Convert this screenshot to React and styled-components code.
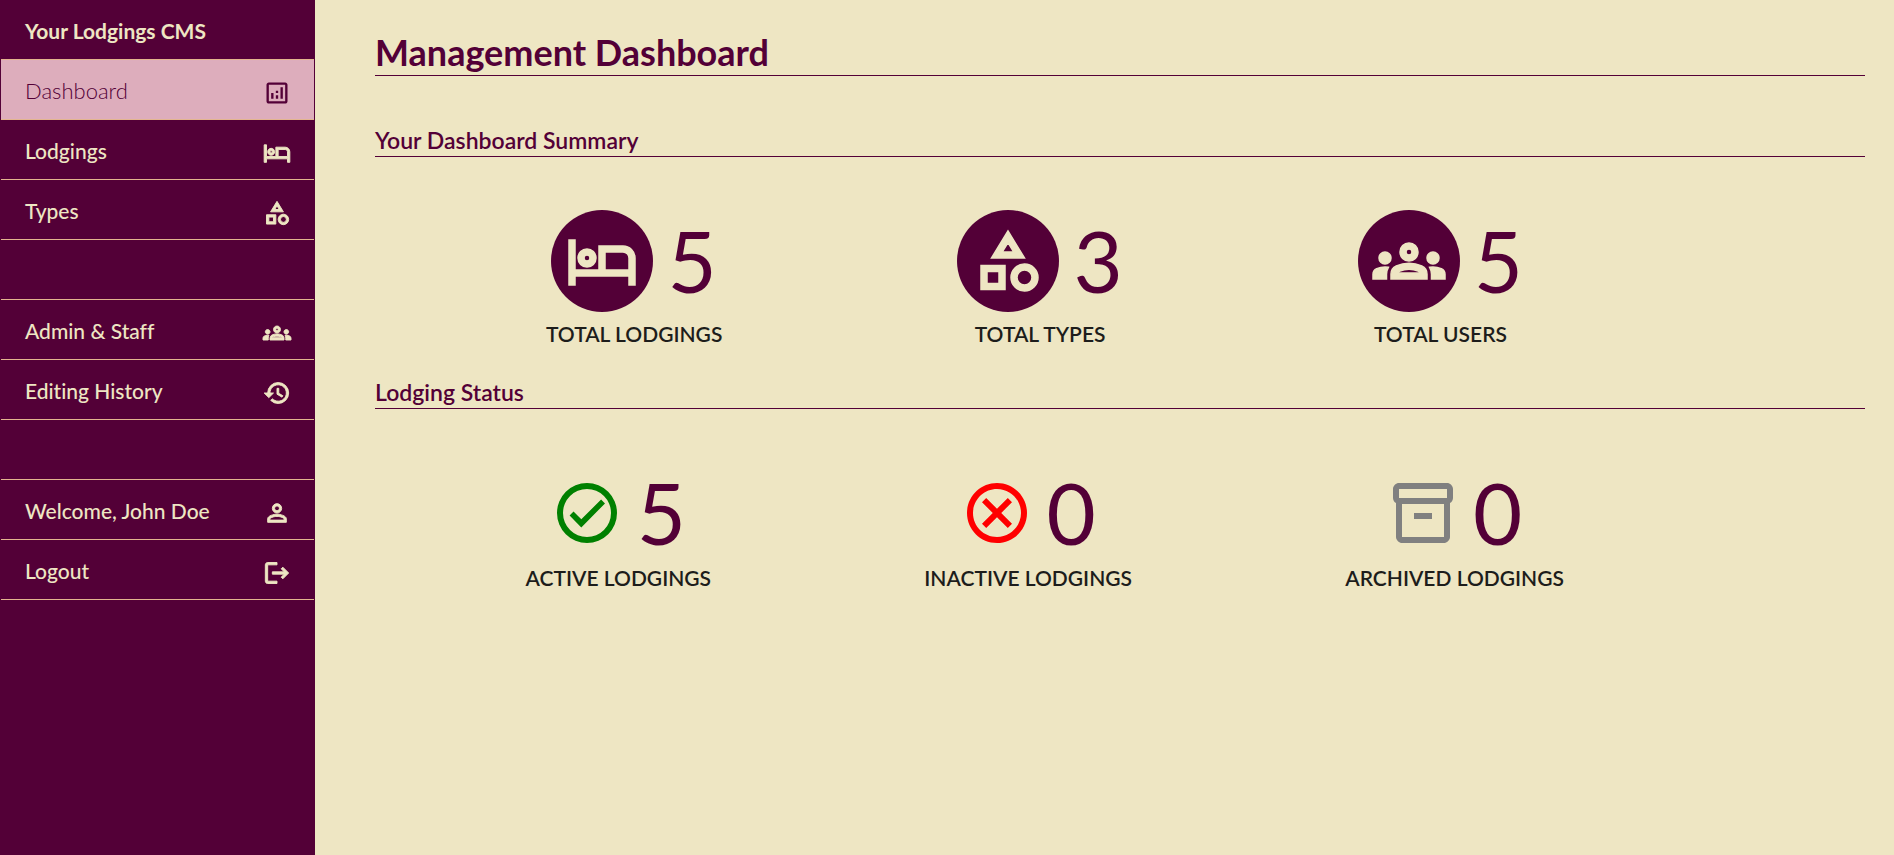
import React from 'react';
import styled, { createGlobalStyle } from 'styled-components';
import {
  MdHistory,
  MdLogout,
  MdOutlineAnalytics,
  MdOutlineCancel,
  MdOutlineCategory,
  MdOutlineGroups,
  MdOutlineHotel,
  MdOutlineInventory2,
  MdPersonOutline,
} from 'react-icons/md';

const plum = '#530037';
const cream = '#eee6c3';

const GlobalStyle = createGlobalStyle`
  *, *::before, *::after { box-sizing: border-box; }
  body {
    margin: 0;
    background: ${cream};
    color: #1d1d1b;
    font-family: Lato, "Liberation Sans", sans-serif;
    font-size: 21px;
    font-weight: 500;
    font-variant-ligatures: none;
  }
`;

const Layout = styled.div`
  display: flex;
  min-height: 100vh;
`;

const Sidebar = styled.aside`
  flex: 0 0 315px;
  padding: 0 1px;
  background: ${plum};
  color: ${cream};
`;

const Brand = styled.div`
  height: 60px;
  padding: 0 24px;
  border-bottom: 1px solid #e3b58f;
  font-weight: 700;
  line-height: 61px;
`;

const NavList = styled.ul`
  margin: 0;
  padding: 0;
  list-style: none;
`;

const NavItem = styled.li`
  height: 60px;
  border-bottom: 1px solid #e3b58f;
`;

const NavLink = styled.a`
  display: flex;
  align-items: center;
  justify-content: space-between;
  height: 100%;
  padding: 2px 23px 0 24px;
  background: ${(p) => (p.$active ? '#ddadbc' : 'transparent')};
  color: ${(p) => (p.$active ? plum : cream)};
  font-size: ${(p) => (p.$active ? '22px' : '21px')};
  font-weight: ${(p) => (p.$active ? 300 : 500)};
  text-decoration: none;

  svg {
    width: 28px;
    height: 28px;
    margin-top: 4px;
    overflow: visible;
    stroke-width: ${(p) => (p.$active ? 0 : 0.8)};
  }

  path[fill='none'] {
    stroke: none;
  }
`;

const Main = styled.main`
  flex: 1;
  min-width: 0;
  padding: 32px 29px 32px 60px;
`;

const Title = styled.h1`
  margin: 0 0 48px;
  padding-bottom: 3px;
  border-bottom: 1px solid ${plum};
  color: ${plum};
  font-size: 36px;
  font-weight: 700;
  line-height: 40px;
`;

const SectionTitle = styled.h2`
  margin: 0;
  border-bottom: 1px solid ${plum};
  color: ${plum};
  font-size: 23px;
  font-weight: 600;
  line-height: 32px;
`;

const Stats = styled.div`
  display: grid;
  grid-template-columns: ${(p) => p.$tracks};
  padding: 53px 0 29px;

  > :nth-child(1) { grid-column: 2; }
  > :nth-child(2) { grid-column: 4; }
  > :nth-child(3) { grid-column: 6; }
`;

const Stat = styled.div`
  display: flex;
  flex-direction: column;
  align-items: center;
  gap: ${(p) => p.$gap};
`;

const Figure = styled.div`
  display: flex;
  align-items: center;
  gap: 14px;
  height: 102px;
`;

const Badge = styled.span`
  display: flex;
  padding: ${(p) => (p.$filled ? '15px' : '0')};
  border-radius: 50%;
  background: ${(p) => (p.$filled ? plum : 'transparent')};
  color: ${(p) => p.$color};

  svg {
    width: 72px;
    height: 72px;
    overflow: visible;
    stroke-width: ${(p) => (p.$filled ? 0.5 : 0)};
  }

  path[fill='none'] {
    stroke: none;
  }
`;

const Count = styled.span`
  color: ${plum};
  font-size: 85px;
  font-weight: 400;
  line-height: 100px;
  padding-bottom: 2px;
`;

const Label = styled.span`
  font-weight: 600;
  line-height: 26px;
  text-transform: uppercase;
`;

function CheckIcon(props) {
  return (
    <svg viewBox="0 0 24 24" fill="currentColor" {...props}>
      <path
        fillRule="evenodd"
        d="M12 2a10 10 0 1 0 0 20 10 10 0 0 0 0-20Zm0 2a8 8 0 1 1 0 16 8 8 0 0 1 0-16Z"
      />
      <path d="M6.2 12.8 7.5 11.5l2.6 2.6 6.6-6.6L18 8.8l-7.9 8Z" />
    </svg>
  );
}

const navigation = [
  { label: 'Dashboard', icon: MdOutlineAnalytics, active: true },
  { label: 'Lodgings', icon: MdOutlineHotel },
  { label: 'Types', icon: MdOutlineCategory },
  null,
  { label: 'Admin & Staff', icon: MdOutlineGroups },
  { label: 'Editing History', icon: MdHistory },
  null,
  { label: 'Welcome, John Doe', icon: MdPersonOutline },
  { label: 'Logout', icon: MdLogout },
];

const totals = [
  { label: 'Total Lodgings', count: 5, icon: MdOutlineHotel },
  { label: 'Total Types', count: 3, icon: MdOutlineCategory },
  { label: 'Total Users', count: 5, icon: MdOutlineGroups },
];

const statuses = [
  { label: 'Active Lodgings', count: 5, icon: CheckIcon, color: '#008000' },
  { label: 'Inactive Lodgings', count: 0, icon: MdOutlineCancel, color: '#ff0000' },
  { label: 'Archived Lodgings', count: 0, icon: MdOutlineInventory2, color: '#808080' },
];

function StatCard({ label, count, icon: Icon, color, gap }) {
  return (
    <Stat $gap={gap}>
      <Figure>
        <Badge $filled={!color} $color={color || cream}>
          <Icon aria-hidden="true" />
        </Badge>
        <Count>{count}</Count>
      </Figure>
      <Label>{label}</Label>
    </Stat>
  );
}

export default function App() {
  return (
    <Layout>
      <GlobalStyle />
      <Sidebar>
        <Brand>Your Lodgings CMS</Brand>
        <nav aria-label="Main">
          <NavList>
            {navigation.map((item, index) => (
              <NavItem key={index}>
                {item && (
                  <NavLink
                    href="#"
                    $active={item.active}
                    aria-current={item.active ? 'page' : undefined}
                  >
                    {item.label}
                    <item.icon aria-hidden="true" />
                  </NavLink>
                )}
              </NavItem>
            ))}
          </NavList>
        </nav>
      </Sidebar>
      <Main>
        <Title>Management Dashboard</Title>
        <section>
          <SectionTitle>Your Dashboard Summary</SectionTitle>
          <Stats $tracks="8fr auto 11fr auto 11fr auto 16fr">
            {totals.map((item) => (
              <StatCard key={item.label} {...item} gap="9px" />
            ))}
          </Stats>
        </section>
        <section>
          <SectionTitle>Lodging Status</SectionTitle>
          <Stats $tracks="12fr auto 17fr auto 17fr auto 24fr">
            {statuses.map((item) => (
              <StatCard key={item.label} {...item} gap="1px" />
            ))}
          </Stats>
        </section>
      </Main>
    </Layout>
  );
}
